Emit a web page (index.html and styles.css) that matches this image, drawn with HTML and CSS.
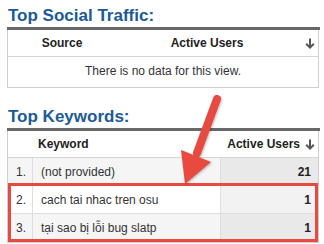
FILE: index.html
```html
<!DOCTYPE html>
<html>
<head>
<meta charset="utf-8">
<link rel="stylesheet" href="styles.css">
</head>
<body>
<div class="page">
  <section class="panel">
    <h2 class="panel-title">Top Social Traffic:</h2>
    <div class="table social">
      <div class="head">
        <span class="center">Source</span>
        <span class="center">Active Users</span>
        <span class="sort-cell"><svg class="sort" viewBox="0 0 10 11" width="10" height="11"><path d="M5 0.5V9.5M1.2 5.8L5 9.6L8.8 5.8" fill="none" stroke="#555" stroke-width="2"/></svg></span>
      </div>
      <div class="empty">There is no data for this view.</div>
    </div>
  </section>

  <section class="panel second">
    <h2 class="panel-title">Top Keywords:</h2>
    <div class="table kw">
      <div class="head">
        <span></span>
        <span class="kw-head">Keyword</span>
        <span class="val-head">Active Users <svg class="sort" viewBox="0 0 10 11" width="10" height="11"><path d="M5 0.5V9.5M1.2 5.8L5 9.6L8.8 5.8" fill="none" stroke="#555" stroke-width="2"/></svg></span>
      </div>
      <div class="row odd"><span class="num">1.</span><span class="key">(not provided)</span><span class="val">21</span></div>
      <div class="row even"><span class="num">2.</span><span class="key">cach tai nhac tren osu</span><span class="val">1</span></div>
      <div class="row odd"><span class="num">3.</span><span class="key">tại sao bị lỗi bug slatp</span><span class="val">1</span></div>
    </div>
  </section>

  <div class="highlight"></div>
  <svg class="pointer" viewBox="0 0 324 244" width="324" height="244">
    <line x1="217" y1="99" x2="197" y2="153" stroke="#e84a40" stroke-width="8" stroke-linecap="round"/>
    <polygon points="181,150 211,162 185,184" fill="#e84a40"/>
  </svg>
</div>
</body>
</html>
```

FILE: styles.css
```css
html, body {
  margin: 0;
  padding: 0;
  background: #fff;
}

body {
  font-family: "Liberation Sans", Arial, sans-serif;
  font-size: 12px;
  color: #333;
}

.page {
  position: relative;
  width: 324px;
  height: 244px;
  overflow: hidden;
  padding-left: 7px;
  box-sizing: border-box;
}

.panel-title {
  margin: 0;
  width: 313px;
  box-sizing: border-box;
  padding: 6px 0 1px 1px;
  font-size: 17px;
  line-height: 20px;
  font-weight: bold;
  color: #1b5a98;
  border-bottom: 3px solid #686868;
}

.second {
  margin-top: 13px;
}

.table {
  width: 312px;
  box-sizing: border-box;
  border: 1px solid #cfcfcf;
  border-top: 0;
}

.head {
  display: grid;
  height: 27px;
  box-sizing: border-box;
  align-items: center;
  border-bottom: 1px solid #d6d6d6;
  font-weight: bold;
  color: #222;
}

.social .head {
  grid-template-columns: 108px 182px 1fr;
}

.center {
  text-align: center;
}

.sort-cell {
  display: flex;
  justify-content: flex-end;
  padding-right: 3px;
}

.sort {
  display: block;
}

.empty {
  height: 30px;
  line-height: 29px;
  text-align: center;
  color: #333;
}

.kw .head {
  grid-template-columns: 25px 188px 1fr;
}

.kw-head {
  padding-left: 5px;
}

.val-head {
  display: flex;
  align-items: center;
  justify-content: flex-end;
  gap: 5px;
  padding-right: 3px;
}

.row {
  display: grid;
  grid-template-columns: 25px 188px 1fr;
  height: 28px;
  box-sizing: border-box;
  border-bottom: 1px solid #dedede;
}

.row:last-child {
  border-bottom: 0;
}

.row span {
  display: flex;
  align-items: center;
  box-sizing: border-box;
}

.num {
  padding-left: 8px;
  border-right: 1px solid #dedede;
}

.key {
  padding-left: 8px;
  border-right: 1px solid #dedede;
}

.val {
  justify-content: flex-end;
  padding-right: 7px;
  font-weight: bold;
  color: #222;
}

.odd .num,
.odd .key {
  background: #f5f5f5;
}

.odd .val {
  background: #e9e9e9;
}

.even .num,
.even .key {
  background: #fff;
}

.even .val {
  background: #f2f2f2;
}

.highlight {
  position: absolute;
  left: 8px;
  top: 183px;
  width: 310px;
  height: 59px;
  box-sizing: border-box;
  border: 3px solid #e84a40;
}

.pointer {
  position: absolute;
  left: 0;
  top: 0;
  filter: drop-shadow(1px 1px 1px rgba(0, 0, 0, 0.25));
  pointer-events: none;
}
```
